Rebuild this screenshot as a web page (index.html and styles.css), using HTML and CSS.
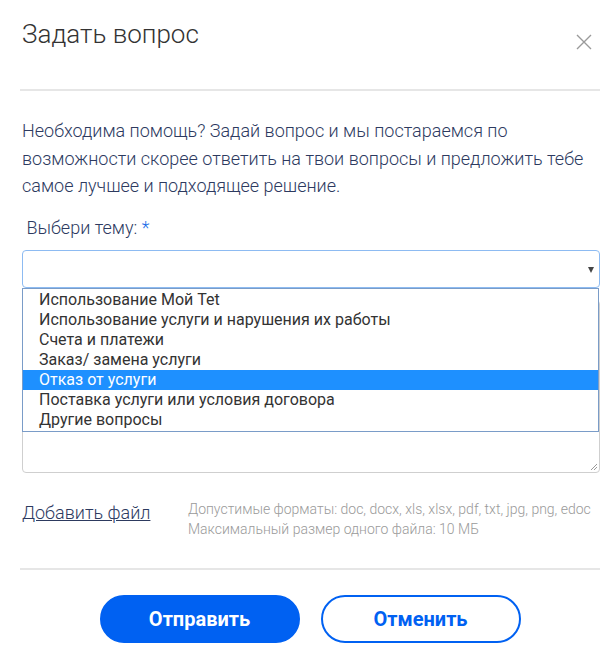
FILE: index.html
```html
<!DOCTYPE html>
<html lang="ru">
<head>
<meta charset="utf-8">
<title>Задать вопрос</title>
<link rel="stylesheet" href="styles.css">
</head>
<body>
<div class="modal">
  <div class="modal-header">
    <h1 class="modal-title">Задать вопрос</h1>
    <button class="close-btn" aria-label="Закрыть">
      <svg width="16" height="16" viewBox="0 0 16 16"><path d="M1 1L15 15M15 1L1 15" stroke="#9a9a9a" stroke-width="1.4" fill="none"/></svg>
    </button>
  </div>
  <div class="modal-body">
    <p class="intro">Необходима помощь? Задай вопрос и мы постараемся по возможности скорее ответить на твои вопросы и предложить тебе самое лучшее и подходящее решение.</p>
    <label class="field-label">&nbsp;Выбери тему: <span class="req">*</span></label>
    <div class="select-wrap">
      <div class="select-box">
        <span class="arrow"></span>
      </div>
      <ul class="dropdown">
        <li>Использование Мой Tet</li>
        <li>Использование услуги и нарушения их работы</li>
        <li>Счета и платежи</li>
        <li>Заказ/ замена услуги</li>
        <li class="selected">Отказ от услуги</li>
        <li>Поставка услуги или условия договора</li>
        <li>Другие вопросы</li>
      </ul>
      <div class="textarea">
        <svg class="grip" width="9" height="9" viewBox="0 0 9 9"><path d="M8 2L2 8M8 5L5 8" stroke="#9a9a9a" stroke-width="1" fill="none"/></svg>
      </div>
    </div>
    <div class="attach">
      <a class="add-file" href="#">Добавить файл</a>
      <div class="formats">
        <div>Допустимые форматы: doc, docx, xls, xlsx, pdf, txt, jpg, png, edoc</div>
        <div>Максимальный размер одного файла: 10 МБ</div>
      </div>
    </div>
  </div>
  <div class="modal-footer">
    <button class="btn btn-primary">Отправить</button>
    <button class="btn btn-outline">Отменить</button>
  </div>
</div>
</body>
</html>
```

FILE: styles.css
```css
html, body {
  margin: 0;
  padding: 0;
  background: #fff;
}
body {
  font-family: Roboto, "Noto Sans", sans-serif;
  color: #2d3a5f;
}
.modal {
  width: 578px;
  margin-left: 22px;
}
.modal-header {
  display: flex;
  justify-content: space-between;
  align-items: flex-start;
  height: 89px;
  border-bottom: 2px solid #e6e6e6;
  margin-left: -2px;
  padding-left: 2px;
}
.modal-title {
  margin: 17px 0 0 0;
  font-size: 26px;
  font-weight: 300;
  line-height: 34px;
  color: #333;
}
.close-btn {
  background: none;
  border: 0;
  padding: 0;
  margin: 34px 8px 0 0;
  width: 16px;
  height: 16px;
  display: block;
  cursor: pointer;
}
.close-btn svg { display: block; }
.intro {
  margin: 26px 0 0 0;
  font-size: 18px;
  font-weight: 300;
  line-height: 27.5px;
  color: #2d3a5f;
}
.field-label {
  display: block;
  margin-top: 16px;
  font-size: 18px;
  font-weight: 300;
  line-height: 24px;
  color: #2d3a5f;
}
.req { color: #1a6fe8; }
.select-wrap {
  position: relative;
  margin-top: 10px;
}
.select-box {
  box-sizing: border-box;
  height: 38px;
  border: 1px solid #8dbbf2;
  border-radius: 4px;
  position: relative;
}
.arrow {
  position: absolute;
  right: 5px;
  top: 16px;
  width: 0;
  height: 0;
  border-left: 3.5px solid transparent;
  border-right: 3.5px solid transparent;
  border-top: 6px solid #444;
}
.dropdown {
  position: absolute;
  left: 0;
  top: 38px;
  width: 577px;
  box-sizing: border-box;
  margin: 0;
  padding: 1px 0 1px 0;
  list-style: none;
  background: #fff;
  border: 1px solid #7a9cc8;
  z-index: 2;
}
.dropdown li {
  height: 20px;
  line-height: 20px;
  padding-left: 16px;
  font-size: 16px;
  color: #333;
  white-space: nowrap;
}
.dropdown li.selected {
  background: #1e90ff;
  color: #fff;
}
.textarea {
  position: relative;
  box-sizing: border-box;
  height: 173px;
  margin-top: 12px;
  border: 1px solid #cfcfcf;
  border-radius: 4px;
}
.grip {
  position: absolute;
  right: 1px;
  bottom: 1px;
}
.attach {
  display: flex;
  align-items: flex-start;
  margin-top: 28px;
}
.add-file {
  font-size: 18px;
  font-weight: 300;
  line-height: 24px;
  color: #2d3a5f;
  text-decoration: underline;
  width: 166px;
  flex: none;
}
.formats {
  font-size: 14px;
  font-weight: 300;
  line-height: 20px;
  color: #9a9a9a;
  margin-top: -2px;
}
.modal-footer {
  margin-top: 29px;
  border-top: 2px solid #e6e6e6;
  margin-left: -2px;
  padding-top: 25px;
  display: flex;
  justify-content: center;
  gap: 21px;
  padding-right: 0;
}
.btn {
  box-sizing: border-box;
  width: 200px;
  height: 48px;
  border-radius: 24px;
  font-family: Roboto, sans-serif;
  font-size: 20px;
  font-weight: 700;
  cursor: pointer;
}
.btn-primary {
  background: #0061f2;
  border: 2px solid #0061f2;
  color: #fff;
}
.btn-outline {
  background: #fff;
  border: 2px solid #0061f2;
  color: #0061f2;
}
```
